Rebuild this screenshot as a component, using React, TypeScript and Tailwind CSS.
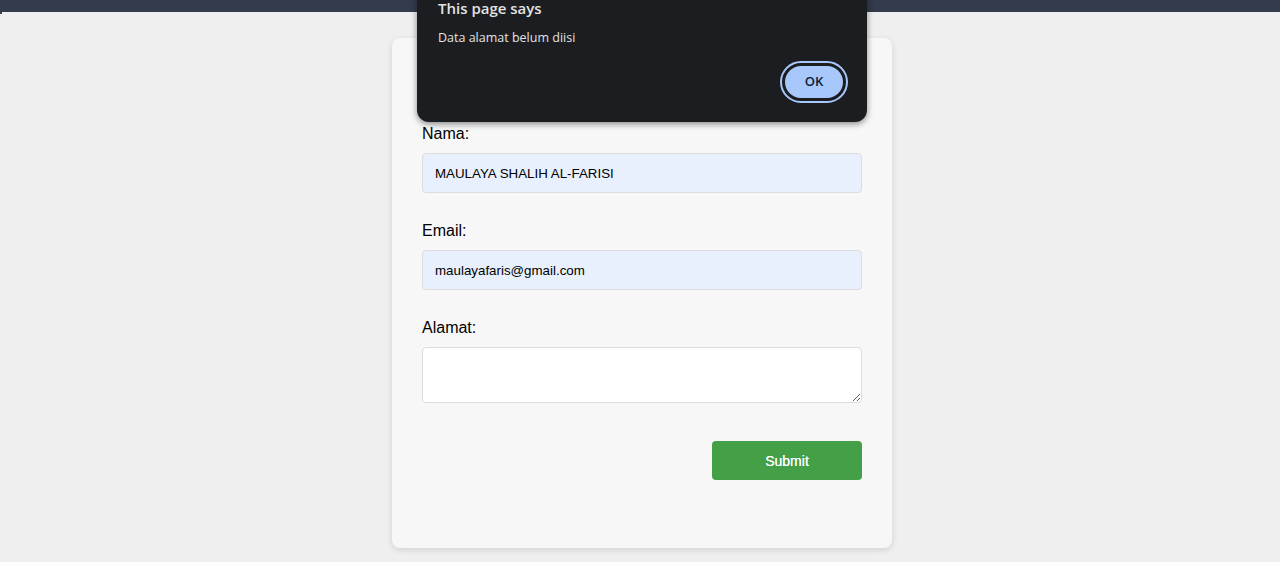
import { useState } from "react"

function App() {
  const [nama, setNama] = useState("MAULAYA SHALIH AL-FARISI")
  const [email, setEmail] = useState("maulayafaris@gmail.com")
  const [alamat, setAlamat] = useState("")

  return (
    <div className="relative min-h-screen w-full bg-[#efefef] font-['Liberation_Sans',Arial,sans-serif] text-black">
      <div className="h-3 w-full bg-[#333b4c]" />
      <div className="h-[2px] w-[2px] bg-[#333b4c]" />

      <div className="flex justify-center pl-1 pt-6">
        <form className="flex w-[500px] flex-col rounded-lg bg-[#f7f7f7] px-[30px] pb-[68px] pt-[87px] shadow-[0_2px_6px_rgba(0,0,0,0.12)]">
          <label className="mb-[10px] h-[18px] text-base leading-[18px]" htmlFor="nama">Nama:</label>
          <input
            id="nama"
            value={nama}
            onChange={(e) => setNama(e.target.value)}
            className="mb-[28px] h-10 w-full rounded border border-[#dcdcdc] bg-[#e8f0fe] px-3 text-[13.33px] outline-none"
          />
          <label className="mb-[10px] h-[19px] text-base leading-[19px]" htmlFor="email">Email:</label>
          <input
            id="email"
            value={email}
            onChange={(e) => setEmail(e.target.value)}
            className="mb-[28px] h-10 w-full rounded border border-[#dcdcdc] bg-[#e8f0fe] px-3 text-[13.33px] outline-none"
          />
          <label className="mb-[10px] h-[19px] text-base leading-[19px]" htmlFor="alamat">Alamat:</label>
          <textarea
            id="alamat"
            value={alamat}
            onChange={(e) => setAlamat(e.target.value)}
            className="mb-[38px] block h-14 w-full resize-y rounded border border-[#dcdcdc] bg-white px-3 py-2 text-[13.33px] outline-none"
          />
          <div className="flex justify-end">
            <button type="button" className="h-[39px] w-[150px] rounded bg-[#43a047] text-sm text-white [text-shadow:0_0_0.4px_#fff]">
              Submit
            </button>
          </div>
        </form>
      </div>

      <div className="absolute left-[417px] top-[-12px] flex h-[134px] w-[450px] flex-col rounded-xl bg-[#1b1d21] pl-[21px] pr-[19px] pt-[10px] font-['Open_Sans','Noto_Sans',sans-serif] text-[#e3e3e3] shadow-[0_2px_6px_rgba(0,0,0,0.45)]">
        <div className="text-[15px] font-semibold leading-5">This page says</div>
        <div className="mt-[10px] text-[12.5px] leading-5">Data alamat belum diisi</div>
        <div className="mt-[13px] flex justify-end">
          <div className="rounded-full border-2 border-[#a8c7fa] p-[1px]">
            <button type="button" className="h-[36px] w-[62px] rounded-full border-2 border-[#1b1d21] bg-[#a8c7fa] text-[13px] font-semibold text-[#0b1d3d]">
              OK
            </button>
          </div>
        </div>
      </div>
    </div>
  )
}

export default App
